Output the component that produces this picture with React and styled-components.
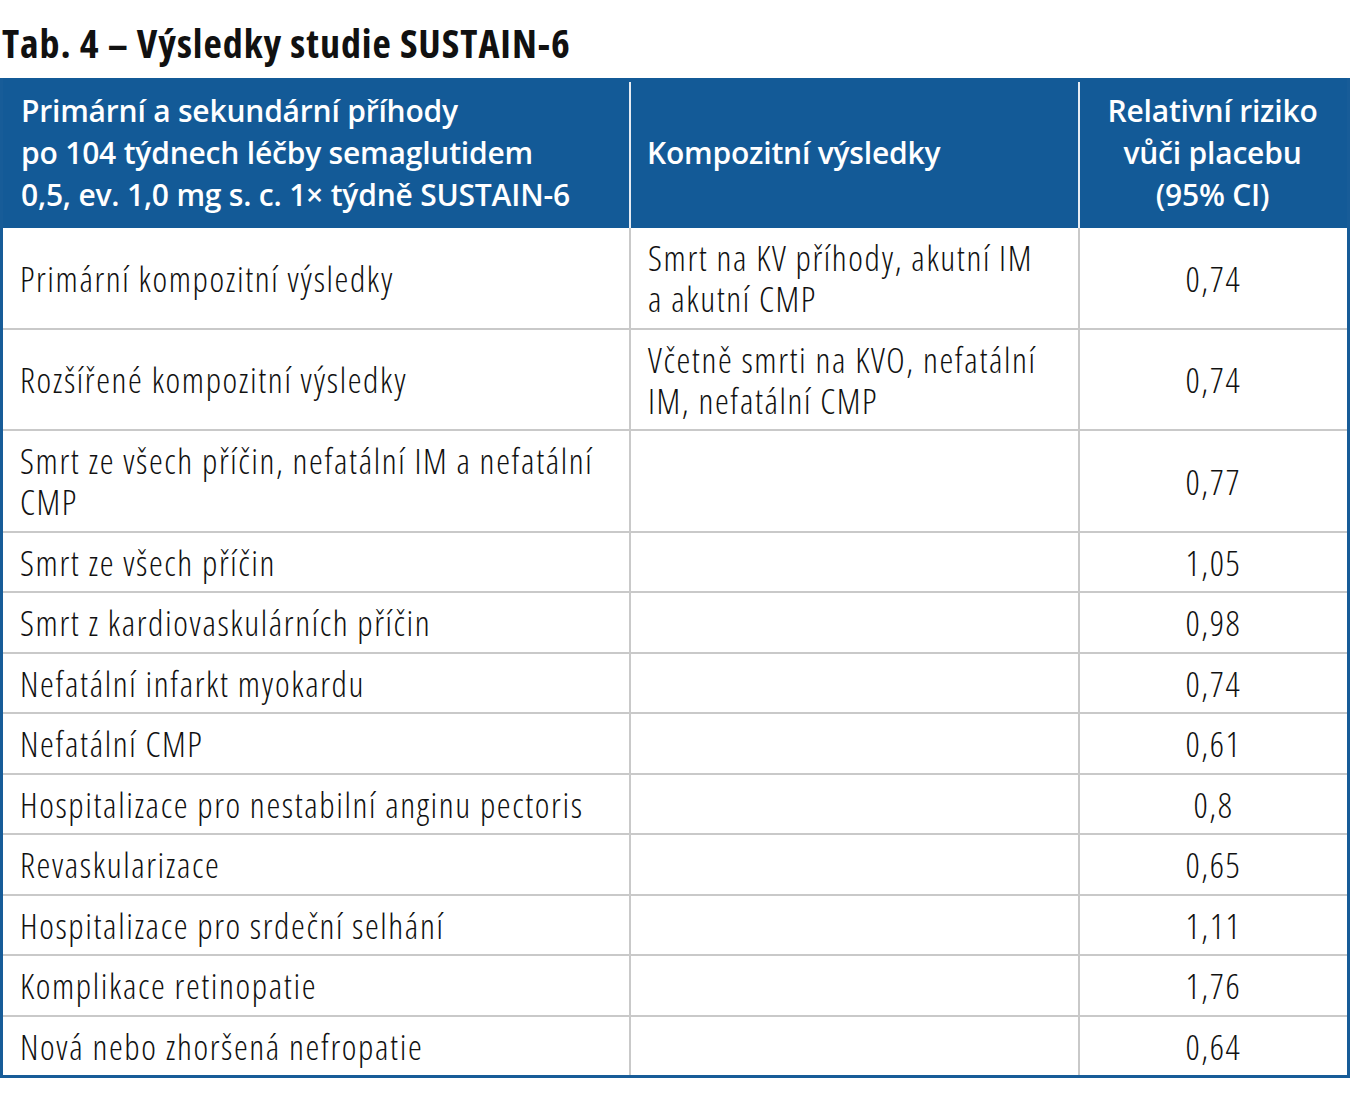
import React from 'react';
import styled, { createGlobalStyle } from 'styled-components';

const GlobalStyle = createGlobalStyle`
  body {
    margin: 0;
    background: #fff;
    font-family: "Open Sans", "DejaVu Sans Condensed", sans-serif;
    font-stretch: 75%;
    color: #1a1a1a;
  }
`;

const rows = [
  { name: 'Primární kompozitní výsledky', comp: 'Smrt na KV příhody, akutní IM\na akutní CMP', rr: '0,74' },
  { name: 'Rozšířené kompozitní výsledky', comp: 'Včetně smrti na KVO, nefatální\nIM, nefatální CMP', rr: '0,74' },
  { name: 'Smrt ze všech příčin, nefatální IM a nefatální\nCMP', comp: '', rr: '0,77' },
  { name: 'Smrt ze všech příčin', comp: '', rr: '1,05' },
  { name: 'Smrt z kardiovaskulárních příčin', comp: '', rr: '0,98' },
  { name: 'Nefatální infarkt myokardu', comp: '', rr: '0,74' },
  { name: 'Nefatální CMP', comp: '', rr: '0,61' },
  { name: 'Hospitalizace pro nestabilní anginu pectoris', comp: '', rr: '0,8' },
  { name: 'Revaskularizace', comp: '', rr: '0,65' },
  { name: 'Hospitalizace pro srdeční selhání', comp: '', rr: '1,11' },
  { name: 'Komplikace retinopatie', comp: '', rr: '1,76' },
  { name: 'Nová nebo zhoršená nefropatie', comp: '', rr: '0,64' },
];

const Lines = ({ text }) =>
  text.split('\n').map((line, i) => (
    <React.Fragment key={i}>
      {i > 0 && <br />}
      {line}
    </React.Fragment>
  ));

const App = () => (
  <Page>
    <GlobalStyle />
    <Title>Tab. 4 – Výsledky studie SUSTAIN-6</Title>
    <Table>
      <HeadCell>
        Primární a sekundární příhody
        <br />
        po 104 týdnech léčby semaglutidem
        <br />
        0,5, ev. 1,0 mg s. c. 1× týdně SUSTAIN-6
      </HeadCell>
      <HeadCell divided>Kompozitní výsledky</HeadCell>
      <HeadCell divided center>
        Relativní riziko
        <br />
        vůči placebu
        <br />
        (95% CI)
      </HeadCell>
      {rows.map((row, i) => {
        const last = i === rows.length - 1;
        return (
          <React.Fragment key={i}>
            <Cell last={last}>
              <span>
                <Lines text={row.name} />
              </span>
            </Cell>
            <Cell last={last} divided>
              <span>
                <Lines text={row.comp} />
              </span>
            </Cell>
            <Cell last={last} divided center>
              {row.rr}
            </Cell>
          </React.Fragment>
        );
      })}
    </Table>
  </Page>
);

export default App;

const Page = styled.div`
  width: 1350px;
`;

const Title = styled.h1`
  margin: 0;
  padding: 23px 0 15px 2px;
  font-size: 40px;
  line-height: 40px;
  font-weight: 700;
  letter-spacing: 0.95px;
  color: #111;
  white-space: nowrap;
`;

const Table = styled.div`
  display: grid;
  grid-template-columns: 626px 449px 1fr;
  border: 3px solid #175c98;
  border-top: 0;
`;

const HeadCell = styled.div`
  display: flex;
  align-items: center;
  justify-content: ${props => (props.center ? 'center' : 'flex-start')};
  text-align: ${props => (props.center ? 'center' : 'left')};
  height: 150px;
  padding: 0 18px;
  background: #135a97;
  color: #fff;
  font-size: 30px;
  font-stretch: 100%;
  font-weight: 600;
  letter-spacing: -0.2px;
  line-height: 42px;
  white-space: nowrap;
  position: relative;
  &::before {
    content: '';
    display: ${props => (props.divided ? 'block' : 'none')};
    position: absolute;
    left: 0;
    top: 4px;
    bottom: 0;
    width: 2px;
    background: #e6ecf3;
  }
`;

const Cell = styled.div`
  display: flex;
  align-items: center;
  justify-content: ${props => (props.center ? 'center' : 'flex-start')};
  min-height: 41px;
  padding: 9px 17px 8.5px;
  font-size: 35px;
  font-weight: 300;
  letter-spacing: 1.6px;
  line-height: 41px;
  white-space: nowrap;
  color: #111;
  border-bottom: ${props => (props.last ? '0' : '2px solid #c9c9c9')};
  border-left: ${props => (props.divided ? '2px solid #c9c9c9' : '0')};
`;
